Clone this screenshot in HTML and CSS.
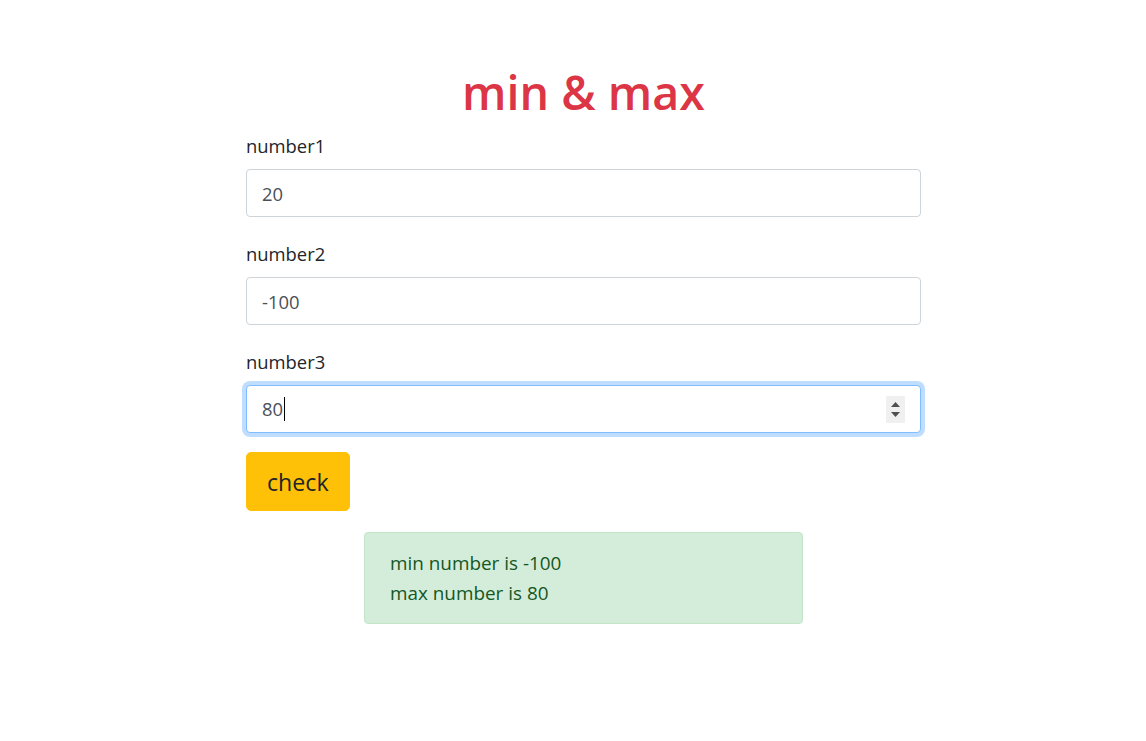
FILE: index.html
```html
<!DOCTYPE html>
<html lang="en">
<head>
<meta charset="utf-8">
<title>min &amp; max</title>
<link rel="stylesheet" href="styles.css">
</head>
<body>
<main class="page">
  <h1 class="title">min &amp; max</h1>
  <form class="form">
    <div class="group">
      <label class="label" for="n1">number1</label>
      <input class="control" id="n1" type="text" value="20">
    </div>
    <div class="group">
      <label class="label" for="n2">number2</label>
      <input class="control" id="n2" type="text" value="-100">
    </div>
    <div class="group">
      <label class="label">number3</label>
      <div class="control focused">
        <span class="value">80</span><span class="caret"></span>
        <span class="spin">
          <svg width="9" height="16" viewBox="0 0 9 16"><path d="M4.5 1 L9 6 L0 6 Z" fill="#505050"/><path d="M0 11 L9 11 L4.5 16 Z" fill="#505050"/></svg>
        </span>
      </div>
    </div>
    <button class="btn" type="button">check</button>
  </form>
  <div class="alert">
    <div>min number is -100</div>
    <div>max number is 80</div>
  </div>
</main>
</body>
</html>
```
FILE: styles.css
```css
html, body {
  margin: 0;
  padding: 0;
  background: #fff;
}
body {
  font-family: "Open Sans", "Noto Sans", sans-serif;
  font-size: 18.4px;
  line-height: 30px;
  color: #212529;
  padding-left: 21px;
}
.page {
  width: 675px;
  margin: 0 auto;
  padding-top: 62px;
}
.title {
  margin: 0 0 7px;
  font-size: 46.6px;
  line-height: 60px;
  font-weight: 600;
  color: #dc3545;
  text-align: center;
}
.form {
  margin: 0;
}
.group {
  display: flex;
  flex-direction: column;
  margin-bottom: 20px;
}
.label {
  display: block;
  padding-top: 2px;
  margin-bottom: 8px;
  line-height: 30px;
}
.control {
  box-sizing: border-box;
  width: 100%;
  height: 48px;
  padding: 0 15px;
  font-family: inherit;
  font-size: 18.4px;
  color: #495057;
  background: #fff;
  border: 1px solid #ced4da;
  border-radius: 4px;
  outline: none;
}
.focused {
  display: flex;
  align-items: center;
  border-color: #80bdff;
  box-shadow: 0 0 0 4px rgba(0, 123, 255, 0.25);
}
.caret {
  display: inline-block;
  width: 1px;
  height: 24px;
  background: #000;
  margin-left: 1px;
}
.spin {
  margin-left: auto;
  width: 19px;
  height: 27px;
  background: #f0f0f0;
  display: flex;
  align-items: center;
  justify-content: center;
}
.spin svg {
  display: block;
}
.btn {
  display: block;
  box-sizing: border-box;
  height: 59px;
  padding: 0 20px;
  font-family: inherit;
  font-size: 23.2px;
  color: #212529;
  background: #ffc107;
  border: 1px solid #ffc107;
  border-radius: 5px;
  margin-top: -1px;
  margin-bottom: 21px;
}
.alert {
  box-sizing: border-box;
  width: 439px;
  margin: 0 auto;
  padding: 15px 25px;
  background: #d4edda;
  border: 1px solid #c3e6cb;
  border-radius: 4px;
  color: #155724;
  font-size: 18.9px;
  line-height: 30px;
}
```
